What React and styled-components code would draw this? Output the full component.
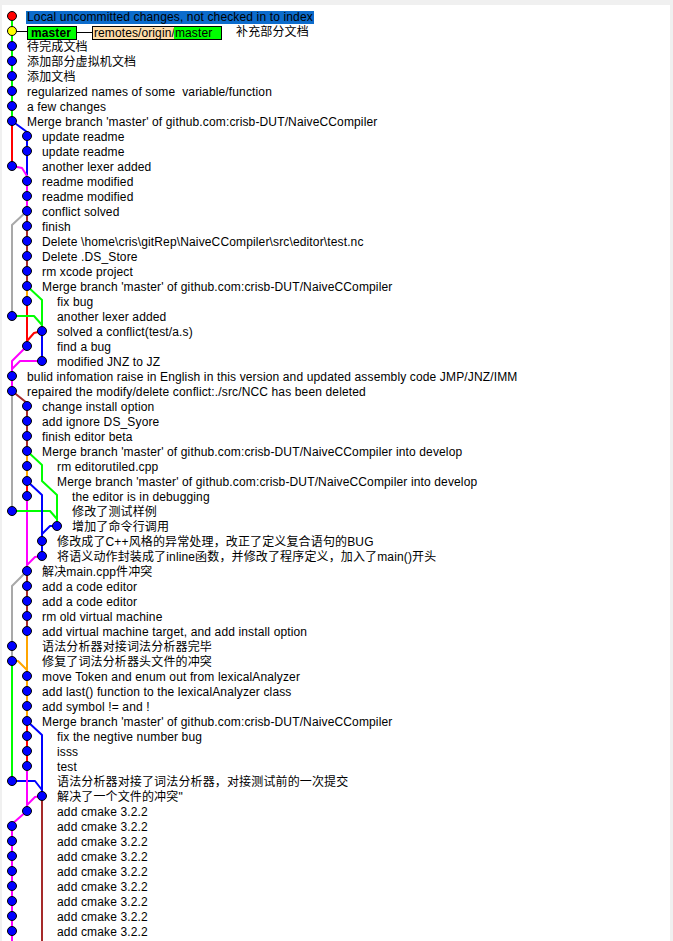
import React from "react";
import styled, { createGlobalStyle } from "styled-components";

const GlobalStyle = createGlobalStyle`
  html, body {
    margin: 0;
    padding: 0;
    background: #f0f0f0;
  }
  body {
    font-family: "Liberation Sans", Arial, "Noto Sans CJK SC", sans-serif;
    font-size: 12px;
    color: #000;
  }
`;

const Canvas = styled.div`
  position: relative;
  margin: 5px 3px 0 2px;
  height: calc(100vh - 5px);
  background: #ffffff;
  overflow: hidden;
`;

const GraphLayer = styled.svg`
  position: absolute;
  left: 0;
  top: 0;
  pointer-events: none;
`;

const List = styled.div`
  padding-top: 5px;
  letter-spacing: 0.14px;
`;

const Row = styled.div`
  display: flex;
  align-items: center;
  height: 15px;
  line-height: 15px;
  padding-left: ${(p) => 25 + 15 * p.$indent}px;
  white-space: nowrap;
`;

const Selected = styled.span`
  display: inline-block;
  margin-left: -1px;
  padding: 0 1px;
  height: 13px;
  line-height: 13px;
  background: #0c6ccc;
  color: #000;
`;

const Tag = styled.span`
  display: inline-flex;
  align-items: center;
  box-sizing: border-box;
  height: 14px;
  border: 1px solid #000;
  font-size: 12px;
  line-height: 12px;
  letter-spacing: 0.1px;
`;

const TagPart = styled.span`
  display: inline-block;
  box-sizing: border-box;
  height: 12px;
  line-height: 12px;
  width: ${(p) => p.$width}px;
  padding-left: ${(p) => p.$pad || 1}px;
  background: ${(p) => p.$bg};
  font-weight: ${(p) => (p.$bold ? "bold" : "normal")};
`;

const Connector = styled.span`
  display: inline-block;
  width: 15px;
  height: 1px;
  background: #000;
`;

const HeadText = styled.span`
  margin-left: 14px;
`;

const COLORS = {
  green: "#00ff00",
  red: "#ff0000",
  blue: "#0000ff",
  magenta: "#ff00ff",
  gray: "#a9a9a9",
  brown: "#a52a2a",
  orange: "#ffa500",
};

const X = [12, 27, 42, 57];
const Y = (n) => 16 + 15 * n;

// graph edges, page coordinates
const edges = [
  ["green", [[12, Y(0)], [12, Y(7)]]],
  ["red", [[12, Y(7)], [12, Y(10)]]],
  ["blue", [[12, Y(7)], [27, Y(7) + 11], [27, Y(10) + 9]]],
  ["magenta", [[12, Y(10)], [22, Y(10) + 2], [27, Y(10) + 10], [27, Y(13)]]],
  ["brown", [[27, Y(13)], [27, Y(18)]]],
  ["gray", [[27, Y(13)], [12, Y(13) + 14], [12, Y(20)]]],
  ["orange", [[27, Y(18)], [27, Y(19)]]],
  ["red", [[27, Y(19)], [27, Y(22)]]],
  ["red", [[42, Y(21)], [34, Y(21) + 2], [27, Y(21) + 10]]],
  ["green", [[27, Y(18)], [42, Y(18) + 14], [42, Y(21) - 8], [42, Y(21)]]],
  ["green", [[12, Y(20)], [34, Y(20)], [42, Y(20) + 9]]],
  ["blue", [[42, Y(21)], [42, Y(23)]]],
  ["magenta", [[27, Y(22)], [12, Y(22) + 15], [12, Y(25)]]],
  ["magenta", [[42, Y(23)], [20, Y(23)], [12, Y(23) + 8]]],
  ["gray", [[12, Y(25)], [12, Y(33)]]],
  ["brown", [[12, Y(25)], [27, Y(25) + 12], [27, Y(29)]]],
  ["orange", [[27, Y(29)], [27, Y(31)]]],
  ["red", [[27, Y(31)], [27, Y(32)]]],
  ["magenta", [[27, Y(32)], [27, Y(37)]]],
  ["magenta", [[42, Y(36)], [35, Y(36) + 1], [27, Y(36) + 9]]],
  ["green", [[27, Y(29)], [42, Y(29) + 14], [42, Y(31)], [57, Y(32) - 1], [57, Y(34)]]],
  ["green", [[12, Y(33)], [50, Y(33)], [57, Y(33) + 8]]],
  ["blue", [[27, Y(31)], [42, Y(31) + 14], [42, Y(36)]]],
  ["blue", [[57, Y(34)], [50, Y(34)], [42, Y(34) + 8]]],
  ["brown", [[27, Y(37)], [27, Y(41)]]],
  ["gray", [[27, Y(37)], [12, Y(37) + 15], [12, Y(43)]]],
  ["orange", [[27, Y(41)], [27, Y(47)]]],
  ["orange", [[12, Y(43)], [18, Y(43)], [27, Y(43) + 9]]],
  ["green", [[12, Y(43)], [12, Y(51)]]],
  ["red", [[27, Y(47)], [27, Y(50)]]],
  ["blue", [[27, Y(47)], [42, Y(47) + 14], [42, Y(52)]]],
  ["blue", [[12, Y(51)], [35, Y(51)], [42, Y(51) + 9]]],
  ["magenta", [[27, Y(50)], [27, Y(53)]]],
  ["magenta", [[42, Y(52)], [35, Y(52) + 1], [27, Y(52) + 9]]],
  ["brown", [[42, Y(52)], [42, 960]]],
  ["magenta", [[27, Y(53)], [12, Y(53) + 13], [12, 960]]],
];

const merge = "Merge branch 'master' of github.com:crisb-DUT/NaiveCCompiler";

// [text, lane of dot, text indent]
const commits = [
  ["Local uncommitted changes, not checked in to index", 0, 0],
  ["补充部分文档", 0, 0],
  ["待完成文档", 0, 0],
  ["添加部分虚拟机文档", 0, 0],
  ["添加文档", 0, 0],
  ["regularized names of some\u00a0 variable/function", 0, 0],
  ["a few changes", 0, 0],
  [merge, 0, 0],
  ["update readme", 1, 1],
  ["update readme", 1, 1],
  ["another lexer added", 0, 1],
  ["readme modified", 1, 1],
  ["readme modified", 1, 1],
  ["conflict solved", 1, 1],
  ["finish", 1, 1],
  ["Delete \\home\\cris\\gitRep\\NaiveCCompiler\\src\\editor\\test.nc", 1, 1],
  ["Delete .DS_Store", 1, 1],
  ["rm xcode project", 1, 1],
  [merge, 1, 1],
  ["fix bug", 1, 2],
  ["another lexer added", 0, 2],
  ["solved a conflict(test/a.s)", 2, 2],
  ["find a bug", 1, 2],
  ["modified JNZ to JZ", 2, 2],
  ["bulid infomation raise in English in this version and updated assembly code JMP/JNZ/IMM", 0, 0],
  ["repaired the modify/delete conflict:./src/NCC has been deleted", 0, 0],
  ["change install option", 1, 1],
  ["add ignore DS_Syore", 1, 1],
  ["finish editor beta", 1, 1],
  [merge + " into develop", 1, 1],
  ["rm editorutiled.cpp", 1, 2],
  [merge + " into develop", 1, 2],
  ["the editor is in debugging", 1, 3],
  ["修改了测试样例", 0, 3],
  ["增加了命令行调用", 3, 3],
  ["修改成了C++风格的异常处理，改正了定义复合语句的BUG", 2, 2],
  ["将语义动作封装成了inline函数，并修改了程序定义，加入了main()开头", 2, 2],
  ["解决main.cpp件冲突", 1, 1],
  ["add a code editor", 1, 1],
  ["add a code editor", 1, 1],
  ["rm old virtual machine", 1, 1],
  ["add virtual machine target, and add install option", 1, 1],
  ["语法分析器对接词法分析器完毕", 0, 1],
  ["修复了词法分析器头文件的冲突", 0, 1],
  ["move Token and enum out from lexicalAnalyzer", 1, 1],
  ["add last() function to the lexicalAnalyzer class", 1, 1],
  ["add symbol != and !", 1, 1],
  [merge, 1, 1],
  ["fix the negtive number bug", 1, 2],
  ["isss", 1, 2],
  ["test", 1, 2],
  ["语法分析器对接了词法分析器，对接测试前的一次提交", 0, 2],
  ["解决了一个文件的冲突\"", 2, 2],
  ...Array.from({ length: 9 }, (_, i) => ["add cmake 3.2.2", i === 0 ? 1 : 0, 2]),
];

const dotFill = (i) => (i === 0 ? "#ff0000" : i === 1 ? "#ffff00" : "#0000ff");

function Graph() {
  return (
    <GraphLayer width="120" height="960">
      <g transform="translate(-2,-5)">
        {edges.map(([color, pts], i) => (
          <polyline
            key={i}
            points={pts.map((p) => p.join(",")).join(" ")}
            fill="none"
            stroke={COLORS[color]}
            strokeWidth="2"
            strokeLinejoin="round"
          />
        ))}
        <line x1={12} y1={Y(1) + 0.5} x2={27} y2={Y(1) + 0.5} stroke="#000" strokeWidth="1" />
        {commits.map(([, lane], i) => (
          <circle
            key={i}
            cx={X[lane]}
            cy={Y(i)}
            r="4.5"
            fill={dotFill(i)}
            stroke="#000"
            strokeWidth="1"
          />
        ))}
      </g>
    </GraphLayer>
  );
}

function CommitRow({ index, text, indent }) {
  if (index === 0) {
    return (
      <Row $indent={indent}>
        <Selected>{text}</Selected>
      </Row>
    );
  }
  if (index === 1) {
    return (
      <Row $indent={indent}>
        <Tag>
          <TagPart $bg="#00ff00" $width={48} $pad={3} $bold>
            master
          </TagPart>
        </Tag>
        <Connector />
        <Tag>
          <TagPart $bg="#ffddaa" $width={81}>
            remotes/origin/
          </TagPart>
          <TagPart $bg="#00ff00" $width={47} $pad={0}>
            master
          </TagPart>
        </Tag>
        <HeadText>{text}</HeadText>
      </Row>
    );
  }
  return <Row $indent={indent}>{text}</Row>;
}

export default function App() {
  return (
    <>
      <GlobalStyle />
      <Canvas>
        <Graph />
        <List>
          {commits.map(([text, , indent], i) => (
            <CommitRow key={i} index={i} text={text} indent={indent} />
          ))}
        </List>
      </Canvas>
    </>
  );
}
